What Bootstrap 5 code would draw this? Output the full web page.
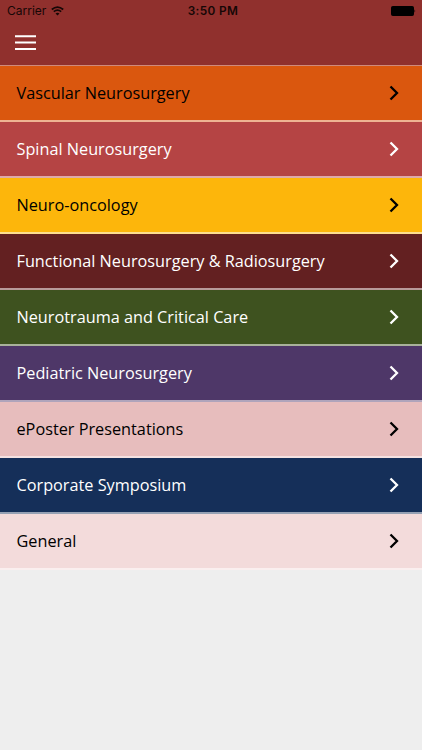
<!DOCTYPE html>
<html lang="en">
<head>
<meta charset="utf-8">
<meta name="viewport" content="width=device-width, initial-scale=1">
<title>Sessions</title>
<link rel="stylesheet" href="https://cdn.jsdelivr.net/npm/bootstrap@5.3.0/dist/css/bootstrap.min.css">
<style>
body{background:#eee;font-family:"Open Sans",sans-serif}
.app-header{height:66px;background:#90302d;border-bottom:1px solid #d08a7c}
.status-bar{height:22px;font:12px/22px Inter,sans-serif;color:#160706;padding:0 6px 0 7px}
.status-bar>*{flex:1 1 0}
.status-left{gap:5px}
.clock{font-size:11.8px;font-weight:600;letter-spacing:.4px;padding-left:3px}
.menu-btn{margin:13px 0 0 15px;width:21px;height:16px}
.topic{height:56px;padding:1px 23px 0 16.5px;font-size:16.26px;color:#000;border-bottom:2px solid rgba(255,255,255,.55);text-decoration:none}
.topic svg{margin-bottom:2px}
.topic-light{color:#fff}
.vascular{background:#da570e}.spinal{background:#b54444}.oncology{background:#fdb60b}
.functional{background:#632021}.trauma{background:#3e521f}.pediatric{background:#4e3768}
.eposter{background:#e7bdbd}.corporate{background:#152f59}.general{background:#f3dbdb}
</style>
</head>
<body>
<svg class="d-none"><symbol id="chev" viewBox="0 0 10 16"><path d="M1.5 1.5 8 8l-6.5 6.5" fill="none" stroke="currentColor" stroke-width="2.3"/></symbol></svg>
<header class="app-header">
<div class="status-bar d-flex align-items-center">
<div class="status-left d-flex align-items-center"><span class="carrier">Carrier</span>
<svg width="13" height="10" viewBox="0 0 13 10" fill="none" stroke="currentColor" stroke-width="1.7"><path d="M.8 3.5Q6.5-1.4 12.2 3.5M2.8 5.7q3.7-3 7.4 0"/><path d="M4.5 7.4q2-1.5 4 0l-2 2.1z" fill="currentColor" stroke="none"/></svg></div>
<div class="clock text-center">3:50 PM</div>
<div class="d-flex justify-content-end"><svg width="25" height="10" viewBox="0 0 25 10"><rect x=".5" y=".5" width="22" height="9" rx="1" fill="#000" stroke="#000"/><path d="M23.5 3.2q1.5 1.8 0 3.6z"/></svg></div>
</div>
<button class="menu-btn btn p-0 border-0 d-block lh-1" aria-label="Menu"><svg class="d-block" width="21" height="16" viewBox="0 0 21 16" fill="#fff"><path d="M0 .2h21v2H0zM0 6.5h21v2H0zM0 13h21v2H0z"/></svg></button>
</header>
<nav>
<a href="#" class="topic vascular d-flex align-items-center justify-content-between"><span>Vascular Neurosurgery</span><svg width="10" height="16"><use href="#chev"/></svg></a>
<a href="#" class="topic topic-light spinal d-flex align-items-center justify-content-between"><span>Spinal Neurosurgery</span><svg width="10" height="16"><use href="#chev"/></svg></a>
<a href="#" class="topic oncology d-flex align-items-center justify-content-between"><span>Neuro-oncology</span><svg width="10" height="16"><use href="#chev"/></svg></a>
<a href="#" class="topic topic-light functional d-flex align-items-center justify-content-between"><span>Functional Neurosurgery &amp; Radiosurgery</span><svg width="10" height="16"><use href="#chev"/></svg></a>
<a href="#" class="topic topic-light trauma d-flex align-items-center justify-content-between"><span>Neurotrauma and Critical Care</span><svg width="10" height="16"><use href="#chev"/></svg></a>
<a href="#" class="topic topic-light pediatric d-flex align-items-center justify-content-between"><span>Pediatric Neurosurgery</span><svg width="10" height="16"><use href="#chev"/></svg></a>
<a href="#" class="topic eposter d-flex align-items-center justify-content-between"><span>ePoster Presentations</span><svg width="10" height="16"><use href="#chev"/></svg></a>
<a href="#" class="topic topic-light corporate d-flex align-items-center justify-content-between"><span>Corporate Symposium</span><svg width="10" height="16"><use href="#chev"/></svg></a>
<a href="#" class="topic general d-flex align-items-center justify-content-between"><span>General</span><svg width="10" height="16"><use href="#chev"/></svg></a>
</nav>
<script src="https://cdn.jsdelivr.net/npm/bootstrap@5.3.0/dist/js/bootstrap.bundle.min.js"></script>
</body>
</html>
